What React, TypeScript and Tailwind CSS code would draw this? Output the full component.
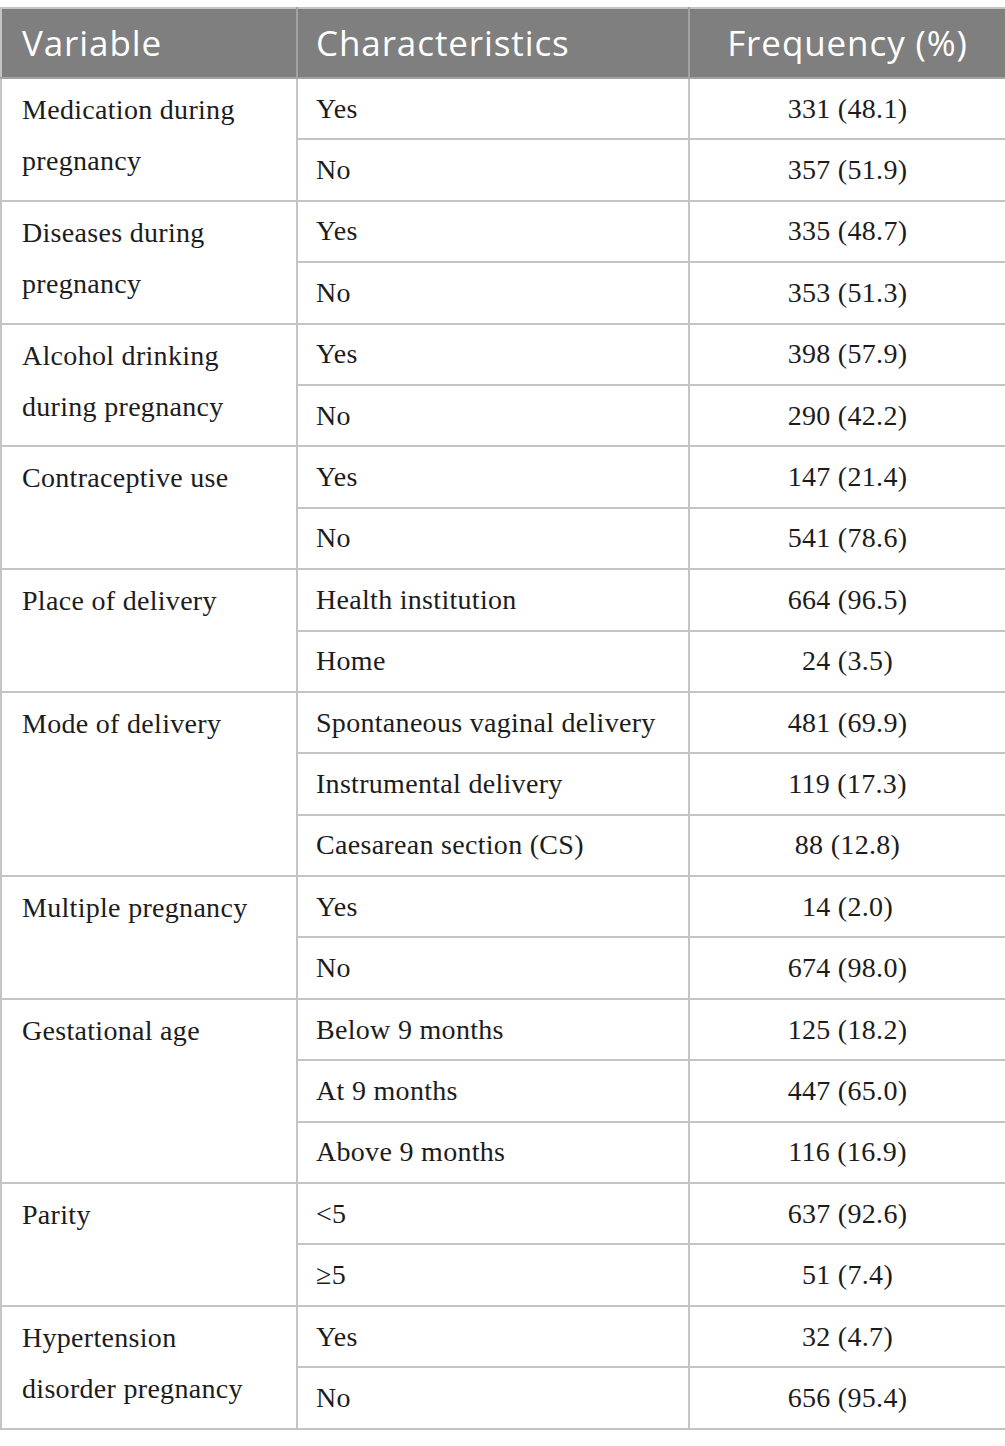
const groups: { variable: string; rows: [string, string][] }[] = [
  { variable: "Medication during pregnancy", rows: [["Yes", "331 (48.1)"], ["No", "357 (51.9)"]] },
  { variable: "Diseases during pregnancy", rows: [["Yes", "335 (48.7)"], ["No", "353 (51.3)"]] },
  { variable: "Alcohol drinking during pregnancy", rows: [["Yes", "398 (57.9)"], ["No", "290 (42.2)"]] },
  { variable: "Contraceptive use", rows: [["Yes", "147 (21.4)"], ["No", "541 (78.6)"]] },
  { variable: "Place of delivery", rows: [["Health institution", "664 (96.5)"], ["Home", "24 (3.5)"]] },
  {
    variable: "Mode of delivery",
    rows: [
      ["Spontaneous vaginal delivery", "481 (69.9)"],
      ["Instrumental delivery", "119 (17.3)"],
      ["Caesarean section (CS)", "88 (12.8)"],
    ],
  },
  { variable: "Multiple pregnancy", rows: [["Yes", "14 (2.0)"], ["No", "674 (98.0)"]] },
  {
    variable: "Gestational age",
    rows: [
      ["Below 9 months", "125 (18.2)"],
      ["At 9 months", "447 (65.0)"],
      ["Above 9 months", "116 (16.9)"],
    ],
  },
  { variable: "Parity", rows: [["<5", "637 (92.6)"], ["≥5", "51 (7.4)"]] },
  { variable: "Hypertension disorder pregnancy", rows: [["Yes", "32 (4.7)"], ["No", "656 (95.4)"]] },
];

const cell = "border-2 border-[#c4c4c4]";

export default function App() {
  return (
    <div className="bg-white pt-[7px] min-h-[1446px]">
      <table
        className="w-[1005px] border-collapse table-fixed text-[#1c1c1c]"
        style={{ fontFamily: '"Liberation Serif", "Times New Roman", serif' }}
      >
        <colgroup>
          <col className="w-[296px]" />
          <col className="w-[392px]" />
          <col className="w-[317px]" />
        </colgroup>
        <thead>
          <tr
            className="h-[70px] bg-[#7f7f7f] text-white text-[35px] tracking-[0.9px]"
            style={{ fontFamily: '"Open Sans", "Noto Sans", sans-serif' }}
          >
            <th className="border-2 border-[#a3a3a3] border-t-[#c4c4c4] border-l-[#c4c4c4] text-left font-normal pl-[20px]">
              Variable
            </th>
            <th className="border-2 border-[#a3a3a3] border-t-[#c4c4c4] text-left font-normal pl-[18px]">
              Characteristics
            </th>
            <th className="border-2 border-[#a3a3a3] border-t-[#c4c4c4] border-r-[#c4c4c4] text-center font-normal">
              Frequency (%)
            </th>
          </tr>
        </thead>
        <tbody className="text-[28px] tracking-[0.3px]">
          {groups.map((g) =>
            g.rows.map(([ch, freq], i) => (
              <tr key={g.variable + ch} className="h-[61.4px]">
                {i === 0 && (
                  <td
                    rowSpan={g.rows.length}
                    className={`${cell} align-top pl-[20px] pr-[30px] pt-[5px] leading-[51px]`}
                  >
                    {g.variable}
                  </td>
                )}
                <td className={`${cell} pl-[18px] leading-none`}>{ch}</td>
                <td className={`${cell} text-center leading-none`}>{freq}</td>
              </tr>
            ))
          )}
        </tbody>
      </table>
    </div>
  );
}
